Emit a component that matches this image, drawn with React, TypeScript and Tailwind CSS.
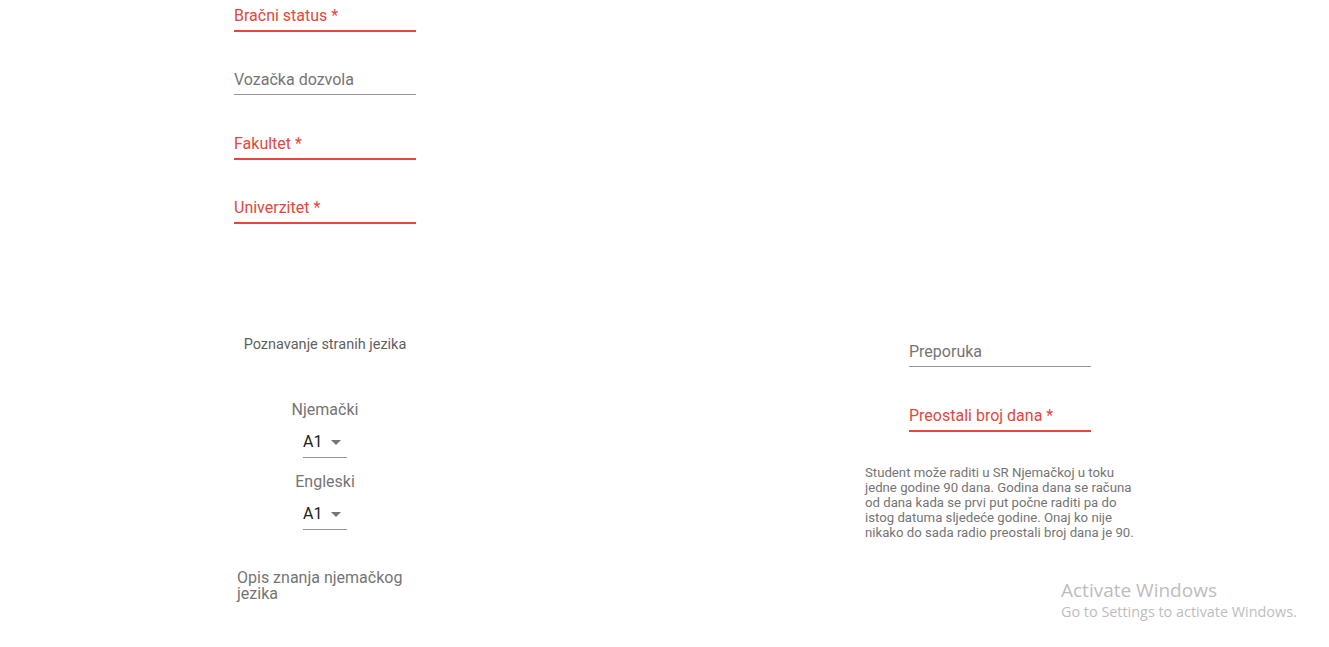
import React from 'react';

const Field = ({ label, required, error }: { label: string; required?: boolean; error?: boolean }) => (
  <div className="h-16 pt-2">
    <div className={`h-[18px] text-base leading-[18px] ${error ? 'text-[#e8453c]' : 'text-[#757575]'}`}>
      {label}
      {required && <span> *</span>}
    </div>
    <div className="relative mt-[5px] h-[2px]">
      {error ? (
        <div className="h-[2px] bg-[#e8453c]" />
      ) : (
        <div className="h-px bg-[#949494]" />
      )}
    </div>
  </div>
);

const LevelSelect = ({ lang }: { lang: string }) => (
  <div className="flex h-[72px] flex-col items-center">
    <div className="h-[18px] text-base leading-[18px] text-[#757575]">{lang}</div>
    <div className="mt-[10px] flex w-[44px] flex-col">
      <div className="flex h-[26px] items-center justify-between">
        <span className="text-base leading-[18px] text-[#212121]">A1</span>
        <svg width="10" height="5" viewBox="0 0 10 5" className="mr-[6px]">
          <path d="M0 0 L10 0 L5 5 Z" fill="#757575" />
        </svg>
      </div>
      <div className="mt-[2px] h-px bg-[#949494]" />
    </div>
  </div>
);

export default function App() {
  return (
    <div className="relative h-[647px] w-[1329px] overflow-hidden bg-white font-['Roboto',sans-serif]">
      <div className="ml-[234px] w-[182px] -mt-[1px]">
        <Field label="Bračni status" required error />
        <Field label="Vozačka dozvola" />
        <Field label="Fakultet" required error />
        <Field label="Univerzitet" required error />
      </div>

      <div className="mt-[81px] flex">
        <div className="ml-[234px] w-[182px]">
          <div className="text-center text-[14.5px] leading-[18px] text-[#5f5f5f]">Poznavanje stranih jezika</div>
          <div className="mt-[47px]">
            <LevelSelect lang="Njemački" />
            <LevelSelect lang="Engleski" />
          </div>
          <div className="mt-[25px] w-[180px] pl-[3px] text-base leading-4 text-[#757575]">
            Opis znanja njemačkog jezika
          </div>
        </div>

        <div className="ml-[447px] flex w-[274px] flex-col items-center -mt-px">
          <div className="w-[182px]">
            <Field label="Preporuka" />
            <Field label="Preostali broj dana" required error />
          </div>
          <p className="mt-[2px] w-[274px] whitespace-nowrap pl-[2px] text-[13.2px] leading-[15px] text-[#757575]">
            Student može raditi u SR Njemačkoj u toku
            <br />
            jedne godine 90 dana. Godina dana se računa
            <br />
            od dana kada se prvi put počne raditi pa do
            <br />
            istog datuma sljedeće godine. Onaj ko nije
            <br />
            nikako do sada radio preostali broj dana je 90.
          </p>
        </div>
      </div>

      <div className="absolute left-[1061px] top-[578px] font-['Open_Sans',sans-serif] text-[#bdbdbd]">
        <div className="text-[19px] leading-6">Activate Windows</div>
        <div className="text-[14.4px] leading-5">Go to Settings to activate Windows.</div>
      </div>
    </div>
  );
}
